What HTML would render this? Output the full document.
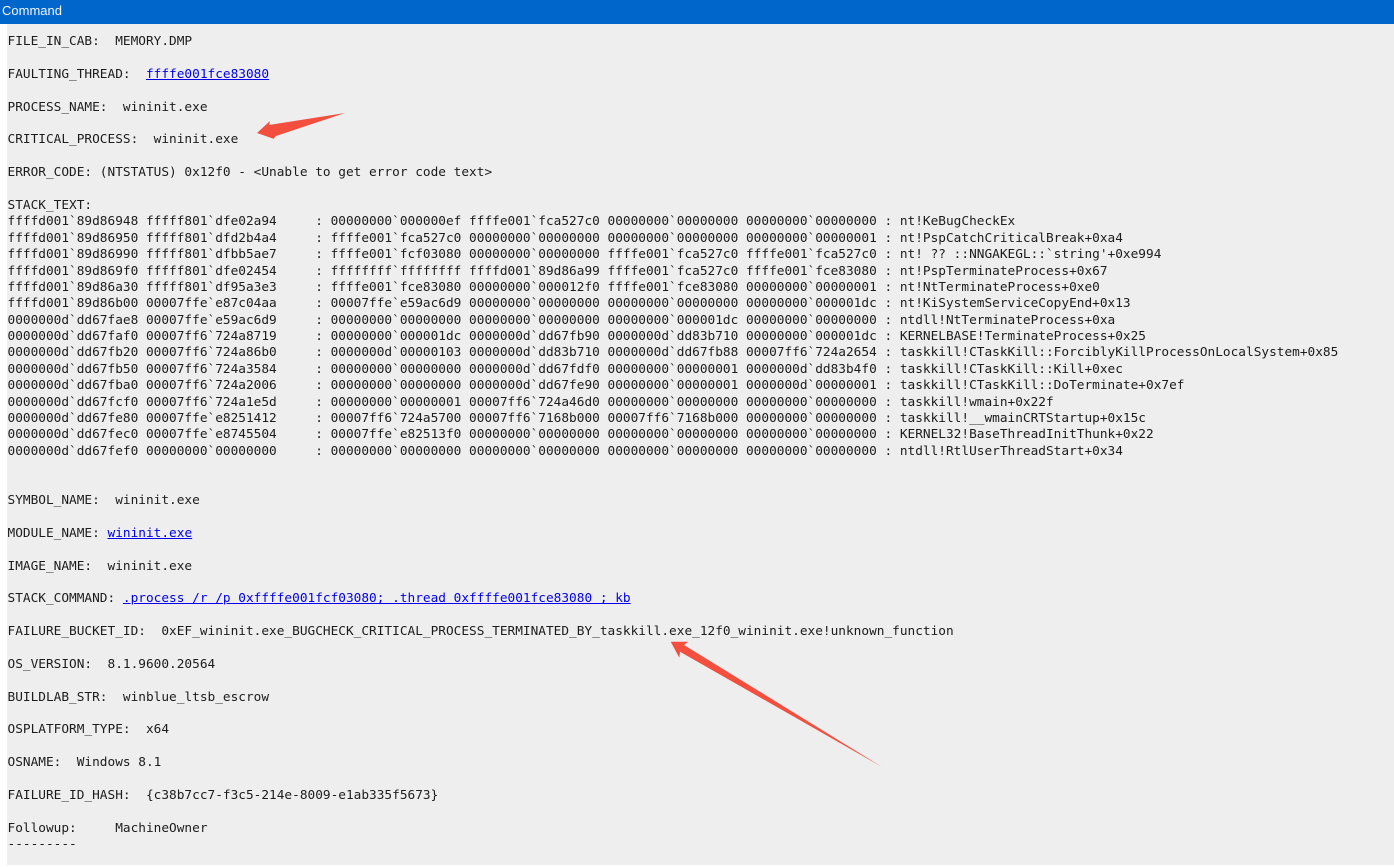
<!DOCTYPE html>
<html lang="en">
<head>
<meta charset="utf-8">
<title>Command</title>
<style>
html,body{margin:0;padding:0;background:#fff;width:1394px;height:867px;overflow:hidden}
#bar{position:absolute;left:0;top:0;width:1394px;height:24px;background:#0066cc;color:#f2f7fc;font:13px/21px "Liberation Sans",sans-serif;padding-left:2px;box-sizing:border-box}
#panel{position:absolute;left:7px;top:24px;width:1387px;height:841px;background:#eeeeee;overflow:hidden}
pre{position:absolute;left:.5px;top:10.05px;margin:0;font-family:"DejaVu Sans Mono",monospace;font-size:12.785px;letter-spacing:.007px;line-height:16.385px;color:#1c1c1c;white-space:pre}
a{color:#0000ee;text-decoration:underline}
svg{position:absolute;left:0;top:0}
</style>
</head>
<body>
<div id="bar">Command</div>
<div id="panel">
<pre>FILE_IN_CAB:  MEMORY.DMP

FAULTING_THREAD:  <a>ffffe001fce83080</a>

PROCESS_NAME:  wininit.exe

CRITICAL_PROCESS:  wininit.exe

ERROR_CODE: (NTSTATUS) 0x12f0 - &lt;Unable to get error code text&gt;

STACK_TEXT:
ffffd001`89d86948 fffff801`dfe02a94     : 00000000`000000ef ffffe001`fca527c0 00000000`00000000 00000000`00000000 : nt!KeBugCheckEx
ffffd001`89d86950 fffff801`dfd2b4a4     : ffffe001`fca527c0 00000000`00000000 00000000`00000000 00000000`00000001 : nt!PspCatchCriticalBreak+0xa4
ffffd001`89d86990 fffff801`dfbb5ae7     : ffffe001`fcf03080 00000000`00000000 ffffe001`fca527c0 ffffe001`fca527c0 : nt! ?? ::NNGAKEGL::`string'+0xe994
ffffd001`89d869f0 fffff801`dfe02454     : ffffffff`ffffffff ffffd001`89d86a99 ffffe001`fca527c0 ffffe001`fce83080 : nt!PspTerminateProcess+0x67
ffffd001`89d86a30 fffff801`df95a3e3     : ffffe001`fce83080 00000000`000012f0 ffffe001`fce83080 00000000`00000001 : nt!NtTerminateProcess+0xe0
ffffd001`89d86b00 00007ffe`e87c04aa     : 00007ffe`e59ac6d9 00000000`00000000 00000000`00000000 00000000`000001dc : nt!KiSystemServiceCopyEnd+0x13
0000000d`dd67fae8 00007ffe`e59ac6d9     : 00000000`00000000 00000000`00000000 00000000`000001dc 00000000`00000000 : ntdll!NtTerminateProcess+0xa
0000000d`dd67faf0 00007ff6`724a8719     : 00000000`000001dc 0000000d`dd67fb90 0000000d`dd83b710 00000000`000001dc : KERNELBASE!TerminateProcess+0x25
0000000d`dd67fb20 00007ff6`724a86b0     : 0000000d`00000103 0000000d`dd83b710 0000000d`dd67fb88 00007ff6`724a2654 : taskkill!CTaskKill::ForciblyKillProcessOnLocalSystem+0x85
0000000d`dd67fb50 00007ff6`724a3584     : 00000000`00000000 0000000d`dd67fdf0 00000000`00000001 0000000d`dd83b4f0 : taskkill!CTaskKill::Kill+0xec
0000000d`dd67fba0 00007ff6`724a2006     : 00000000`00000000 0000000d`dd67fe90 00000000`00000001 0000000d`00000001 : taskkill!CTaskKill::DoTerminate+0x7ef
0000000d`dd67fcf0 00007ff6`724a1e5d     : 00000000`00000001 00007ff6`724a46d0 00000000`00000000 00000000`00000000 : taskkill!wmain+0x22f
0000000d`dd67fe80 00007ffe`e8251412     : 00007ff6`724a5700 00007ff6`7168b000 00007ff6`7168b000 00000000`00000000 : taskkill!__wmainCRTStartup+0x15c
0000000d`dd67fec0 00007ffe`e8745504     : 00007ffe`e82513f0 00000000`00000000 00000000`00000000 00000000`00000000 : KERNEL32!BaseThreadInitThunk+0x22
0000000d`dd67fef0 00000000`00000000     : 00000000`00000000 00000000`00000000 00000000`00000000 00000000`00000000 : ntdll!RtlUserThreadStart+0x34


SYMBOL_NAME:  wininit.exe

MODULE_NAME: <a>wininit.exe</a>

IMAGE_NAME:  wininit.exe

STACK_COMMAND: <a>.process /r /p 0xffffe001fcf03080; .thread 0xffffe001fce83080 ; kb</a>

FAILURE_BUCKET_ID:  0xEF_wininit.exe_BUGCHECK_CRITICAL_PROCESS_TERMINATED_BY_taskkill.exe_12f0_wininit.exe!unknown_function

OS_VERSION:  8.1.9600.20564

BUILDLAB_STR:  winblue_ltsb_escrow

OSPLATFORM_TYPE:  x64

OSNAME:  Windows 8.1

FAILURE_ID_HASH:  {c38b7cc7-f3c5-214e-8009-e1ab335f5673}

Followup:     MachineOwner
---------</pre>
</div>
<svg width="1394" height="867" viewBox="0 0 1394 867">
<polygon fill="#f44e3f" points="257,133 270,121 269,125 345,113 276,136 273.5,138.7"/>
<polygon fill="#f44e3f" points="670.7,641.7 688.3,641.7 684,645 882,767 680,651.7 679.3,657.7"/>
</svg>
</body>
</html>
